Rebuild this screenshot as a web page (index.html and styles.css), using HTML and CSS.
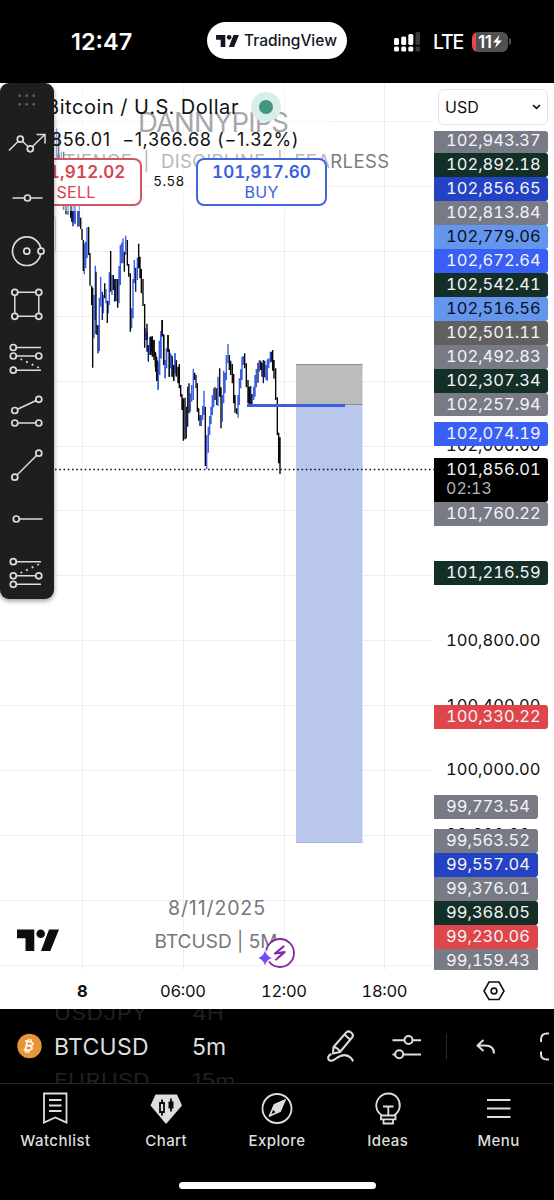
FILE: index.html
```html
<!DOCTYPE html>
<html lang="en">

<head>
    <meta charset="UTF-8">
    <meta name="viewport" content="width=device-width, initial-scale=1.0">
    <title>BTCUSD - TradingView</title>
    <link rel="stylesheet" href="styles.css">
</head>

<body>
    <header class="status">
        <span class="clock">12:47</span>
        <div class="pill">
            <svg class="pill-logo" viewBox="0 0 42 22"><path d="M0 0H17V22H8.500V8.500H0Z"/><circle cx="24" cy="4.300" r="4.300"/><path d="M32 0H42L33 22H23.500Z"/></svg>
            <span>TradingView</span>
        </div>
        <div class="signal">
            <svg width="27" height="20" viewBox="0 0 27 20">
                <g fill="#fff"><rect y="6" width="5" height="7" rx="1.500"/><rect x="7.200" y="4.500" width="5" height="8.500" rx="1.500"/><rect x="14.300" y="2" width="5" height="11" rx="1.500"/><rect y="14.500" width="5" height="5" rx="1.500"/><rect x="7.200" y="14.500" width="5" height="5" rx="1.500"/><rect x="14.300" y="14.500" width="5" height="5" rx="1.500"/></g>
                <g fill="#3a3a3a"><rect x="21.500" y="0" width="4.500" height="13" rx="1.500"/><rect x="21.500" y="14.500" width="4.500" height="5" rx="1.500"/></g>
            </svg>
            <span class="lte">LTE</span>
            <div class="battery"><span>11</span><svg width="9" height="13" viewBox="0 0 9 13"><path d="M6.500 0L0 7.500H3.800L2 13L9 5.500H5Z" fill="#fff"/></svg></div>
            <i class="battery-tip"></i>
        </div>
    </header>

    <main class="chart">
        <svg class="plot" viewBox="0 83 554 926">
            <!-- grid -->
            <path class="grid" d="M0 121.500H432M0 186.500H432M0 251.500H432M0 316.500H432M0 381.500H432M0 446.500H432M0 510.500H432M0 575.500H432M0 640.500H432M0 705.500H432M0 770.500H432M0 835.500H432M0 900.500H432M0 965.500H432M82.500 83V970M183.500 83V970M284.500 83V970M384.500 83V970"/>

            <!-- watermark -->
            <g class="mark">
                <text x="138" y="132" font-size="27.500" textLength="151" fill="#606066">DANNYPIPS</text>
                <text x="41" y="168" font-size="18.500" textLength="348" fill="#7c7c80">PATIENCE&#160; |&#160; DISCIPLINE&#160; |&#160; FEARLESS</text>
                <text x="168" y="915" font-size="19.500" textLength="97">8/11/2025</text>
                <text x="154.500" y="948" font-size="19" textLength="123">BTCUSD | 5M</text>
            </g>

            <!-- candles -->
            <g transform="translate(50 195) scale(.33333)" fill="none" stroke-width="4.200">
                <path stroke="#3a5fe0" d="M20-200V10M34-130V20M54-110V60M76-20V88M72 0V85M88 20V94M103 145V238M107 140V220M111 97V190M132 300V430M136 212V375M148 308V468M152 246V335M160 300V355M168 282V325M175 318V355M178 232V330M186 240V300M207 213V325M211 150V270M215 143V205M219 130V205M227 122V180M245 340V400M249 252V370M253 195V265M262 188V255M287 400V435M299 425V480M324 500V585M328 438V540M332 408V490M345 495V550M349 460V510M362 475V520M375 475V535"/>
                <path stroke="#101c58" d="M65 20V80M69 48V94M141 390V420M144 390V475M157 290V375M198 252V318M194 252V320M257 218V290M295 450V500M366 482V545M379 495V545M84 48V95M291 410V470"/>
                <path stroke="#0a0a0c" d="M26-180V-20M41-130V45M48-60V58M62 10V68M92 68V102M96 102V135M100 135V228M116 96V180M120 175V272M125 272V330M128 278V518M138 230V417M164 265V310M172 317V384M182 168V290M190 240V285M203 252V338M223 170V230M232 135V212M236 207V245M241 235V410M266 146V220M270 185V250M274 222V295M279 252V333M284 327V458M291 386V435M303 425V470M307 424V480M312 435V485M316 470V515M320 485V558M336 375V425M341 418V510M354 420V470M358 463V545M371 515V558"/>
            </g>
            <g transform="translate(150 300) scale(.33333)" fill="none" stroke-width="4.200">
                <path stroke="#3a5fe0" d="M25 185V268M29 122V225M33 95V175M46 180V235M50 148V205M63 165V205M75 160V220M121 280V335M125 255V305M130 206V300M154 345V378M158 318V360M162 272V345M170 405V507M175 380V458M179 348V405M183 320V372M187 285V345M191 265V322M204 230V318M217 285V365M221 212V310M225 218V280M229 165V240M234 132V190M264 285V353M268 235V315M272 208V265M276 170V240M280 168V195M311 260V300M315 225V290M319 207V262M328 180V215M348 195V240M352 178V242M356 175V205M361 155V188"/>
                <path stroke="#101c58" d="M67 170V230M109 320V415M113 260V380M200 265V315M138 225V265M302 258V312M306 282V312M324 188V248M340 180V250M344 182V232M364 155V185M150 345V378"/>
                <path stroke="#0a0a0c" d="M2 110V165M7 110V170M12 120V180M17 160V215M21 180V242M37 60V108M41 105V195M54 105V155M58 152V230M71 195V242M79 182V228M84 200V250M88 192V265M92 255V290M96 283V330M100 295V422M105 293V418M117 250V340M134 218V240M142 250V335M146 325V362M166 320V498M195 262V300M209 205V290M213 262V385M238 165V210M242 182V225M247 192V250M251 222V310M255 285V338M260 325V342M284 160V205M289 190V262M294 240V310M298 260V312M332 182V210M336 188V230M368 150V212M372 180V236M377 205V300M382 292V405M386 398V490M390 412V522"/>
            </g>

            <!-- short position and entry line -->
            <rect x="296" y="364" width="66.500" height="41" fill="#bcbcbc"/>
            <path d="M296 364.500H362.500M296 404.500H362.500" stroke="#8f8f8f"/>
            <rect x="296" y="405" width="66.500" height="438" fill="#b9c7ec"/>
            <path d="M296 842.500H362.500" stroke="#a5b4df"/>
            <path d="M247 405.500H345" stroke="#3b5fdd" stroke-width="2.800"/>
            <path d="M55 469.500H434" stroke="#111" stroke-width="1.600" stroke-dasharray="1.600 2.650"/>

            <!-- price and time ticks -->
            <g class="tick">
                <text x="446" y="451" textLength="94.500">102,000.00</text>
                <text x="446" y="645.500" textLength="94.500">100,800.00</text>
                <text x="446" y="710.500" textLength="94.500">100,400.00</text>
                <text x="446" y="775" textLength="94.500">100,000.00</text>
                <text x="446" y="840" textLength="84">99,600.00</text>
                <text x="77" y="997" font-weight="700">8</text>
                <text x="160" y="997" textLength="46">06:00</text>
                <text x="261" y="997" textLength="46">12:00</text>
                <text x="361.500" y="997" textLength="46">18:00</text>
            </g>
            <g fill="none" stroke="#111" stroke-width="1.600"><path d="M489 982H499L504 991L499 999.500H489L484 991Z"/><circle cx="494" cy="991" r="2.900"/></g>

            <!-- logo and spark badge -->
            <g fill="#0d0d0f"><path d="M17 929.500H34.300V951H25.500V938.300H17Z"/><circle cx="40.700" cy="933.800" r="4.300"/><path d="M49 929.500H59L50.300 951H41Z"/></g>
            <circle cx="280" cy="953" r="14" fill="#fff" stroke="#8029a3" stroke-width="1.800"/>
            <path d="M283.500 946.500L275 953.500L284.500 952.200L276 959.500" fill="none" stroke="#8029a3" stroke-width="2.200" stroke-linejoin="round" stroke-linecap="round"/>
            <path d="M265 950.500Q266.500 956.500 272 958Q266.500 959.500 265 965.500Q263.500 959.500 258 958Q263.500 956.500 265 950.500Z" fill="#774df0" stroke="#fff" stroke-width="3" paint-order="stroke"/>
        </svg>

        <section class="legend">
            <div class="name"><span>Bitcoin / U.S. Dollar</span><i class="live"></i></div>
            <div class="change">101,856.01&#160; −1,366.68 (−1.32%)</div>
            <div class="trade">
                <div class="order sell"><b>101,912.02</b><span>SELL</span></div>
                <span class="spread">5.58</span>
                <div class="order buy"><b>101,917.60</b><span>BUY</span></div>
            </div>
            <div class="collapse"></div>
        </section>

        <aside class="prices">
            <div class="currency"><span>USD</span><svg width="9" height="6" viewBox="0 0 9 6"><path d="M1 1L4.500 4.300L8 1" fill="none" stroke="#111" stroke-width="1.700"/></svg></div>
            <div class="group first">
                <p class="gray cut">102,943.37</p>
                <p class="green">102,892.18</p>
                <p class="navy">102,856.65</p>
                <p class="gray">102,813.84</p>
                <p class="sky">102,779.06</p>
                <p class="blue">102,672.64</p>
                <p class="green">102,542.41</p>
                <p class="sky">102,516.56</p>
                <p class="stone">102,501.11</p>
                <p class="gray">102,492.83</p>
                <p class="green">102,307.34</p>
                <p class="gray">102,257.94</p>
            </div>
            <div class="group entry"><p class="blue">102,074.19</p></div>
            <div class="group last">
                <p class="now">101,856.01<small>02:13</small></p>
                <p class="gray">101,760.22</p>
            </div>
            <div class="group target"><p class="green">101,216.59</p></div>
            <div class="group stop"><p class="red">100,330.22</p></div>
            <div class="group narrow"><p class="gray">99,773.54</p></div>
            <div class="group narrow low">
                <p class="gray">99,563.52</p>
                <p class="navy">99,557.04</p>
                <p class="gray">99,376.01</p>
                <p class="green">99,368.05</p>
                <p class="red">99,230.06</p>
                <p class="gray end">99,159.43</p>
            </div>
        </aside>

        <nav class="tools">
            <svg class="grip" viewBox="0 0 53 34.500"><g fill="#5c5c5c"><circle cx="19.700" cy="12.700" r="1.400"/><circle cx="26.700" cy="12.700" r="1.400"/><circle cx="33.700" cy="12.700" r="1.400"/><circle cx="19.700" cy="21.300" r="1.400"/><circle cx="26.700" cy="21.300" r="1.400"/><circle cx="33.700" cy="21.300" r="1.400"/></g></svg>
            <svg viewBox="0 0 53 53.500"><path d="M9 32.500L20.300 21.200L30.300 30.800L44.500 16.800M36.500 16.500H45V25.500"/><circle cx="20.300" cy="21.200" r="3"/><circle cx="30.300" cy="30.800" r="3"/></svg>
            <svg viewBox="0 0 53 53.500"><path d="M12.500 27H42.500"/><circle cx="27.500" cy="27" r="3"/></svg>
            <svg viewBox="0 0 53 53.500"><circle cx="26.800" cy="26.200" r="14.300"/><circle cx="26.800" cy="26.200" r="3"/><circle cx="41" cy="26.200" r="3"/></svg>
            <svg viewBox="0 0 53 53.500"><path d="M14.800 14.300H38.800V38.300H14.800Z"/><circle cx="14.800" cy="14.300" r="3"/><circle cx="38.800" cy="14.300" r="3"/><circle cx="38.800" cy="38.300" r="3"/><circle cx="14.800" cy="38.300" r="3"/></svg>
            <svg viewBox="0 0 53 53.500"><path d="M13 15.500H41M13 24H38M13 38.200H41"/><path class="dots" d="M20.500 27L39 35.800"/><circle cx="13.300" cy="15.500" r="3"/><circle cx="13.300" cy="24" r="3"/><circle cx="38.800" cy="24" r="3"/><circle cx="13.300" cy="38.200" r="3"/></svg>
            <svg viewBox="0 0 53 53.500"><path d="M14.800 25.500L38.800 14.300M14.800 38H38.800"/><circle cx="14.800" cy="25.500" r="3"/><circle cx="38.800" cy="14.300" r="3"/><circle cx="14.800" cy="38" r="3"/><circle cx="38.800" cy="38" r="3"/></svg>
            <svg viewBox="0 0 53 53.500"><path d="M14.800 38.200L38.800 14.200"/><circle cx="14.800" cy="38.200" r="3"/><circle cx="38.800" cy="14.200" r="3"/></svg>
            <svg viewBox="0 0 53 53.500"><path d="M16.300 27H42.500"/><circle cx="16.300" cy="27" r="3"/></svg>
            <svg viewBox="0 0 53 53.500"><path d="M13 15.700H41M13 29.800H38M13 38.300H41"/><path class="dots" d="M20.500 27L39 18.200"/><circle cx="13.300" cy="15.700" r="3"/><circle cx="13.300" cy="29.800" r="3"/><circle cx="38.800" cy="29.800" r="3"/><circle cx="13.300" cy="38.300" r="3"/></svg>
        </nav>
    </main>

    <section class="toolbar">
        <svg class="coin" viewBox="0 0 26 26"><circle cx="13" cy="13" r="12.700" fill="#e8953a"/><path d="M10.800 7L8.500 18M8.500 7.500L13.500 8.500Q17.300 9.500 16.300 11.500Q15.500 13.200 10 12.200L12.500 12.700Q16.500 13.800 15.500 16Q14.500 18.300 7 16.800M12.300 5.500L11.800 8M15 6L14.500 8.500M9.500 17.500L9 20M12.200 17.800L11.700 20.500" fill="none" stroke="#fff" stroke-width="1.700"/></svg>
        <div class="wheel symbols"><span class="ghost">USDJPY</span><span>BTCUSD</span><span class="ghost">EURUSD</span></div>
        <div class="wheel frames"><span class="ghost">4H</span><span>5m</span><span class="ghost">15m</span></div>
        <svg class="actions" viewBox="320 1009 234 74">
            <g fill="none" stroke="#dedede" stroke-width="2" stroke-linejoin="round">
                <path d="M333.500 1047L346.500 1032.200Q348.500 1030.500 350.800 1032.300Q354 1034.800 352.500 1037L340 1052L333 1053.500ZM333.500 1047Q338.500 1048 340 1052M344.500 1034.500L350 1039.500"/>
                <path d="M331.500 1054Q327 1056 328.500 1059.500Q331 1062.500 336 1058.500Q345 1052 351 1058Q352.500 1059.500 353 1061.500"/>
                <path d="M392.500 1040.300H404.500M412.500 1040.300H421M392.500 1054.500H395M403.500 1054.500H421"/>
                <circle cx="408.500" cy="1040" r="4"/><circle cx="399.200" cy="1054.200" r="4"/>
                <path d="M483.500 1040L477.500 1045.500L483.500 1051M478 1045.500H485Q494 1045.500 494 1053.500"/>
                <path d="M549 1033.500H547Q541 1033.500 541 1039.500V1042M541 1051.500V1054Q541 1059.500 547 1059.500H549"/>
            </g>
            <path d="M446.500 1034V1059" stroke="#2c2c2c"/>
        </svg>
    </section>

    <footer class="tabs">
        <a class="tab">
            <svg viewBox="0 0 36 36"><path d="M7 2.500H29.500V31.500L18.300 26.500L7 31.500ZM12 9H24.500M12 14.500H24.500M12 20H24.500"/></svg>
            <span>Watchlist</span>
        </a>
        <a class="tab">
            <svg viewBox="0 0 36 36"><path d="M7.500 3.500H29L34 14.500L18 33L2.500 14.500Z" fill="#dedede" stroke="none"/><path d="M12 12H16V21H12ZM14 8.500V12M14 21V24.500M23 7.500V20.500" stroke="#0a0a0a"/><path d="M20.500 10.500H25.500V17.500H20.500Z" fill="#0a0a0a" stroke="none"/></svg>
            <span>Chart</span>
        </a>
        <a class="tab">
            <svg viewBox="0 0 36 36"><circle cx="18" cy="17.500" r="14.500"/><path d="M25.500 9.500L15.500 14L10.500 25L21 20Z" stroke-linejoin="round"/><path d="M25.500 9.500L15.500 14L14 17.500L18 21.500L21 20Z" fill="#dedede"/></svg>
            <span>Explore</span>
        </a>
        <a class="tab">
            <svg viewBox="0 0 36 36"><path d="M12 24.500C5 20 5 12 9 7C14 1 23 1 27.500 7C31 12 31 20 24 24.500M11 24.500H25.500V28.300H11ZM13.500 28.300V32.500H23V28.300M13 15.500H23.500M18.300 15.500V24"/></svg>
            <span>Ideas</span>
        </a>
        <a class="tab">
            <svg viewBox="0 0 36 36"><path d="M6 9H29.500M6 17.500H29.500M6 26H29.500"/></svg>
            <span>Menu</span>
        </a>
        <div class="home"></div>
    </footer>
</body>

</html>
```
FILE: styles.css
```css
* {
    box-sizing: border-box;
}

body {
    margin: 0;
    height: 1200px;
    display: flex;
    flex-direction: column;
    background: #000;
    font-family: Inter, "Liberation Sans", sans-serif;
    overflow: hidden;
}

svg {
    display: block;
    flex: none;
}

/* status bar */
.status {
    height: 83px;
    display: grid;
    grid-template-columns: 207px 140px 1fr;
    align-items: center;
    color: #fff;
}

.clock {
    font-size: 23.5px;
    font-weight: 600;
    padding-left: 71px;
}

.pill {
    height: 37px;
    margin-bottom: 2px;
    border-radius: 19px;
    background: #fff;
    color: #131722;
    display: flex;
    align-items: center;
    gap: 5px;
    padding-left: 9px;
    font-size: 15.5px;
    font-weight: 500;
}

.pill-logo {
    width: 23px;
    height: 12px;
    fill: #131722;
}

.signal {
    display: flex;
    align-items: center;
    padding-left: 47px;
}

.lte {
    font-size: 19.5px;
    font-weight: 500;
    margin-left: 12px;
    width: 28px;
    letter-spacing: -1.2px;
}

.battery {
    width: 36px;
    height: 20px;
    margin-left: 11px;
    border-radius: 6px;
    background: linear-gradient(90deg, #e5484d 4px, #505050 4px);
    display: flex;
    align-items: center;
    gap: 2px;
    padding-left: 6px;
    font-size: 17px;
    font-weight: 600;
    letter-spacing: -0.5px;
}

.battery-tip {
    width: 2px;
    height: 7px;
    margin-left: 1px;
    border-radius: 0 2px 2px 0;
    background: #505050;
}

/* chart, the layers share one grid cell */
.chart {
    height: 926px;
    display: grid;
    grid-template: 926px / 554px;
    background: #fff;
    color: #111;
    font-variant-numeric: tabular-nums;
}

.plot,
.legend,
.prices,
.tools {
    grid-area: 1 / 1;
}

.plot {
    width: 554px;
    height: 926px;
}

.grid {
    stroke: #efeff0;
    fill: none;
}

.mark {
    fill: #77777b;
    font-weight: 400;
    font-variant-numeric: normal;
}

.tick {
    font-size: 16.5px;
    fill: #0f0f0f;
}

.legend {
    width: 330px;
    height: 128px;
    background: rgba(255, 255, 255, 0.45);
}

.name {
    height: 47px;
    padding-left: 46px;
    display: flex;
    align-items: center;
    gap: 12px;
    font-size: 20px;
    letter-spacing: 0.57px;
    white-space: nowrap;
}

.live {
    width: 30px;
    height: 30px;
    border-radius: 50%;
    border: 8px solid #d9eeea;
    background: #43977f;
}

.change {
    height: 18px;
    line-height: 19px;
    padding-right: 31px;
    text-align: right;
    font-size: 18px;
    font-variant-numeric: normal;
    letter-spacing: 0.62px;
    white-space: nowrap;
}

.trade {
    margin-top: 10px;
    padding-left: 10px;
    display: grid;
    grid-template-columns: 132px 54px 131px;
    align-items: center;
}

.order {
    height: 48px;
    border: 2px solid;
    border-radius: 8px;
    background: #fff;
    text-align: center;
    font-size: 16px;
    line-height: 20px;
    padding-top: 2px;
}

.order b {
    display: block;
    font-size: 17px;
    font-weight: 600;
    letter-spacing: 0.2px;
}

.order span {
    letter-spacing: 0.3px;
}

.sell {
    border-color: #d55560;
    color: #d8434f;
}

.buy {
    border-color: #4165dc;
    color: #3a60e0;
}

.spread {
    text-align: center;
    font-size: 13.5px;
    letter-spacing: 0.4px;
    margin-top: -2px;
}

.collapse {
    width: 56px;
    height: 38px;
    margin-top: 9px;
    border: 1px solid #cfcfd2;
    border-radius: 4px;
}

/* price axis */
.prices {
    width: 120px;
    margin-left: 434px;
    padding-top: 6px;
}

.currency {
    width: 110px;
    height: 36px;
    margin-left: 4px;
    padding: 0 6px;
    border: 1px solid #e3e4e8;
    border-radius: 6px;
    display: flex;
    align-items: center;
    justify-content: space-between;
    font-size: 16px;
    background: #fff;
}

.group {
    width: 114px;
    color: #f4f4f6;
    font-size: 16.5px;
    letter-spacing: 0.02px;
}

.group p {
    height: 24px;
    line-height: 22px;
    margin: 0;
    padding-left: 12px;
    border-radius: 0 3px 3px 0;
}

.first {
    margin-top: 6px;
}

.first .cut {
    height: 22px;
    line-height: 19px;
}

.first p:last-child {
    height: 23px;
}

.entry {
    margin-top: 6px;
}

.last {
    margin-top: 11.5px;
}

.target {
    margin-top: 35.5px;
}

.stop {
    margin-top: 120px;
}

.narrow {
    width: 104px;
    margin-top: 66px;
}

.low {
    margin-top: 10px;
}

.group .end {
    height: 21px;
    border-radius: 0;
}

.gray { background: #787b86; }
.green { background: #132f27; }
.navy { background: #2443c4; }
.blue { background: #395ff5; }
.stone { background: #606060; }
.red { background: #df464c; }

.sky {
    background: #6496ee;
    color: #0c1020;
}

.group .now {
    height: 44px;
    background: #000;
}

.now small {
    display: block;
    font-size: 16px;
    line-height: 17px;
    color: #b5b5b5;
}

/* drawing tools */
.tools {
    width: 53.5px;
    height: 516px;
    border-radius: 9px;
    background: #1e1e1e;
    box-shadow: 0 2px 5px rgba(0, 0, 0, 0.4);
}

.tools svg {
    width: 53px;
    height: 53.5px;
    fill: none;
    stroke: #dcdcdc;
    stroke-width: 1.5;
}

.tools .grip {
    height: 34.5px;
    stroke: none;
}

.tools circle {
    stroke-width: 1.7;
}

.tools circle[r="3"] {
    fill: #1e1e1e;
}

.tools .dots {
    stroke-width: 1.8;
    stroke-dasharray: 1.8 4.4;
}

/* symbol toolbar */
.toolbar {
    height: 75px;
    display: flex;
    align-items: center;
    border-bottom: 1px solid #242424;
    color: #dedede;
    overflow: hidden;
}

.coin {
    width: 25px;
    height: 26px;
    margin-left: 17px;
}

.wheel {
    display: flex;
    flex-direction: column;
    font-size: 23px;
    line-height: 33px;
    margin-left: 12px;
    padding-top: 3px;
}

.symbols {
    width: 126px;
    letter-spacing: 0.3px;
}

.frames {
    width: 128px;
}

.ghost {
    color: #202020;
    transform: scaleY(0.8);
    transform-origin: 0 50%;
}

.actions {
    width: 234px;
    height: 74px;
}

/* bottom tabs */
.tabs {
    height: 116px;
    display: grid;
    grid-template-columns: repeat(5, 1fr);
    grid-template-rows: 97.5px 7px;
    color: #dedede;
}

.tab {
    display: flex;
    flex-direction: column;
    align-items: center;
    padding-top: 7px;
    font-size: 15px;
    font-weight: 500;
    letter-spacing: 0.45px;
}

.tab svg {
    width: 36px;
    height: 36px;
    margin-bottom: 4px;
    fill: none;
    stroke: #dedede;
    stroke-width: 1.8;
}

.home {
    grid-column: 1 / -1;
    width: 197px;
    margin: 0 auto;
    border-radius: 4px;
    background: #fff;
}
```
